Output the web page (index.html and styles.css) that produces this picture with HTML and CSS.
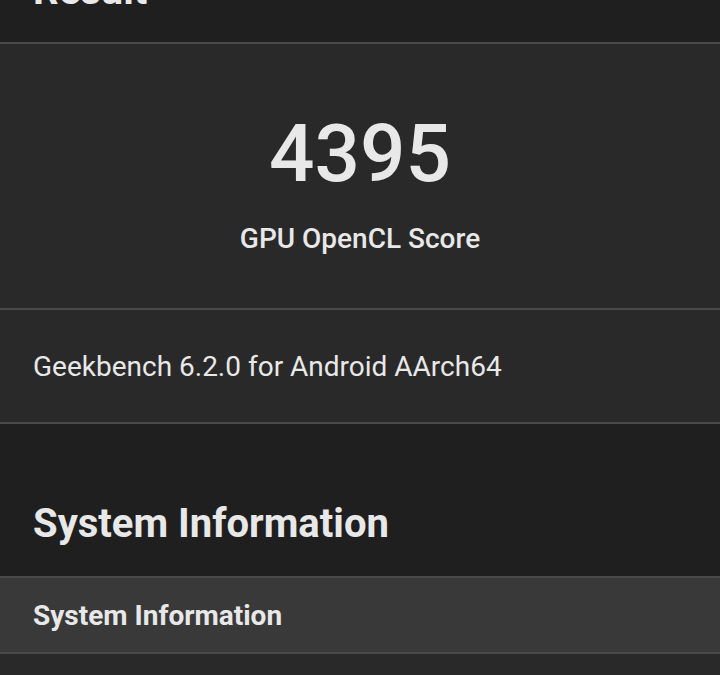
FILE: index.html
```html
<!DOCTYPE html>
<html lang="en">
<head>
  <meta charset="UTF-8">
  <title>Geekbench Result</title>
  <meta name="viewport" content="width=device-width, initial-scale=1.0">
  <link rel="stylesheet" href="styles.css">
</head>
<body>

  <main class="page">
    <h1 class="section-title result-title">Result</h1>

    <div class="card">
      <div class="score-box">
        <div class="score">4395</div>
        <div class="score-label">GPU OpenCL Score</div>
      </div>
      <div class="card-row">Geekbench 6.2.0 for Android AArch64</div>
    </div>

    <h2 class="section-title">System Information</h2>

    <div class="table">
      <div class="table-head">System Information</div>
      <div class="table-row">Operating System</div>
    </div>
  </main>

</body>
</html>
```

FILE: styles.css
```css
body {
  margin: 0;
  font-family: Roboto, 'Noto Sans', sans-serif;
  background-color: #1f1f1f;
  color: #e8e8e8;
  overflow: hidden;
}

.page {
  margin-top: -32px;
}

.section-title {
  margin: 0;
  padding: 0 33px;
  font-size: 40px;
  font-weight: 700;
  line-height: 46px;
}

.result-title {
  padding-bottom: 28px;
}

.card {
  background-color: #292929;
  border-top: 2px solid #4a4a4a;
  border-bottom: 2px solid #4a4a4a;
}

.score-box {
  height: 264px;
  display: flex;
  flex-direction: column;
  align-items: center;
  justify-content: center;
  border-bottom: 2px solid #4a4a4a;
}

.score {
  font-size: 80px;
  font-weight: 500;
  line-height: 80px;
  margin-top: 16px;
}

.score-label {
  font-size: 28px;
  font-weight: 500;
  margin-top: 28px;
}

.card-row {
  height: 112px;
  display: flex;
  align-items: center;
  padding: 0 33px;
  font-size: 28px;
}

h2.section-title {
  margin-top: 77px;
  margin-bottom: 29px;
}

.table {
  border-top: 2px solid #4a4a4a;
}

.table-head {
  background-color: #393939;
  height: 74px;
  display: flex;
  align-items: center;
  padding: 0 33px;
  font-size: 28px;
  font-weight: 700;
  border-bottom: 2px solid #4a4a4a;
}

.table-row {
  background-color: #292929;
  height: 80px;
  display: flex;
  align-items: center;
  padding: 0 33px;
  font-size: 28px;
}
```
